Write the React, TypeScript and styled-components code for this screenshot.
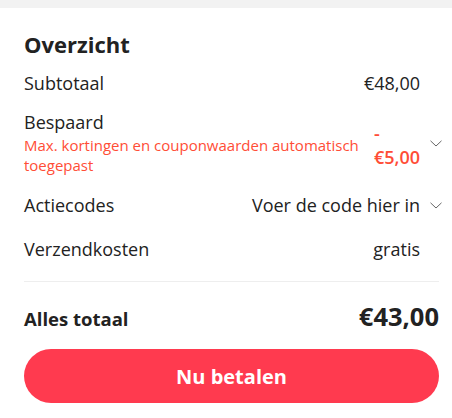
import React from "react";
import styled, { createGlobalStyle } from "styled-components";

const Global = createGlobalStyle`
  html, body { margin: 0; padding: 0; background: #fff; }
  body { font-family: "Open Sans", "Noto Sans", sans-serif; color: #222; }
  * { box-sizing: border-box; }
`;

const TopBar = styled.div`
  height: 8px;
  background: #f2f2f2;
`;

const Card = styled.div`
  padding: 21px 13px 0 24px;
  display: flex;
  flex-direction: column;
`;

const Title = styled.h2`
  margin: 0;
  font-size: 22px;
  line-height: 30px;
  font-weight: 700;
  color: #222;
`;

const Row = styled.div<{ $mt: number }>`
  display: flex;
  align-items: center;
  margin-top: ${(p) => p.$mt}px;
  margin-right: -3px;
  gap: 10px;
`;

const Left = styled.div`
  flex: 1;
  min-width: 0;
  display: flex;
  flex-direction: column;
`;

const Label = styled.div`
  font-size: 18px;
  line-height: 24px;
`;

const LabelTight = styled(Label)`
  line-height: 22px;
`;

const Note = styled.div`
  font-size: 15px;
  line-height: 20px;
  padding-top: 2px;
  color: #ff4d36;
`;

const Value = styled.div<{ $red?: boolean }>`
  font-size: 18px;
  line-height: 24px;
  white-space: nowrap;
  text-align: right;
  color: ${(p) => (p.$red ? "#ff4d36" : "#222")};
  font-weight: ${(p) => (p.$red ? 600 : 400)};
`;

const WrapValue = styled(Value)`
  white-space: normal;
  width: min-content;
  text-align: left;
  padding-top: 4px;
`;

const IconSlot = styled.div`
  width: 12px;
  display: flex;
  align-items: center;
  justify-content: center;
  color: #666;
`;

const Divider = styled.div`
  height: 1px;
  background: #eeeeee;
  margin-top: 20px;
`;

const TotalRow = styled.div`
  display: flex;
  align-items: baseline;
  justify-content: space-between;
  margin-top: 17px;
`;

const TotalLabel = styled.div`
  font-size: 18.5px;
  line-height: 34px;
  font-weight: 700;
`;

const TotalValue = styled.div`
  font-size: 25.5px;
  line-height: 34px;
  font-weight: 700;
`;

const PayButton = styled.button`
  margin-top: 13px;
  height: 54px;
  width: 100%;
  border: none;
  border-radius: 27px;
  background: #ff3a4f;
  color: #fff;
  font-family: "Open Sans", "Noto Sans", sans-serif;
  font-size: 20px;
  font-weight: 700;
  cursor: pointer;
`;

const Chevron = () => (
  <svg width="12" height="7" viewBox="0 0 12 7" fill="none">
    <path d="M0.5 0.8 L6 6 L11.5 0.8" stroke="currentColor" strokeWidth="1" />
  </svg>
);

export default function App() {
  return (
    <>
      <Global />
      <TopBar />
      <Card>
        <Title>Overzicht</Title>
        <Row $mt={12}>
          <Left>
            <Label>Subtotaal</Label>
          </Left>
          <Value>€48,00</Value>
          <IconSlot />
        </Row>
        <Row $mt={16}>
          <Left>
            <LabelTight>Bespaard</LabelTight>
            <Note>Max. kortingen en couponwaarden automatisch toegepast</Note>
          </Left>
          <WrapValue $red>- €5,00</WrapValue>
          <IconSlot>
            <Chevron />
          </IconSlot>
        </Row>
        <Row $mt={18}>
          <Left>
            <Label>Actiecodes</Label>
          </Left>
          <Value>Voer de code hier in</Value>
          <IconSlot>
            <Chevron />
          </IconSlot>
        </Row>
        <Row $mt={20}>
          <Left>
            <Label>Verzendkosten</Label>
          </Left>
          <Value>gratis</Value>
          <IconSlot />
        </Row>
        <Divider />
        <TotalRow>
          <TotalLabel>Alles totaal</TotalLabel>
          <TotalValue>€43,00</TotalValue>
        </TotalRow>
        <PayButton>Nu betalen</PayButton>
      </Card>
    </>
  );
}
